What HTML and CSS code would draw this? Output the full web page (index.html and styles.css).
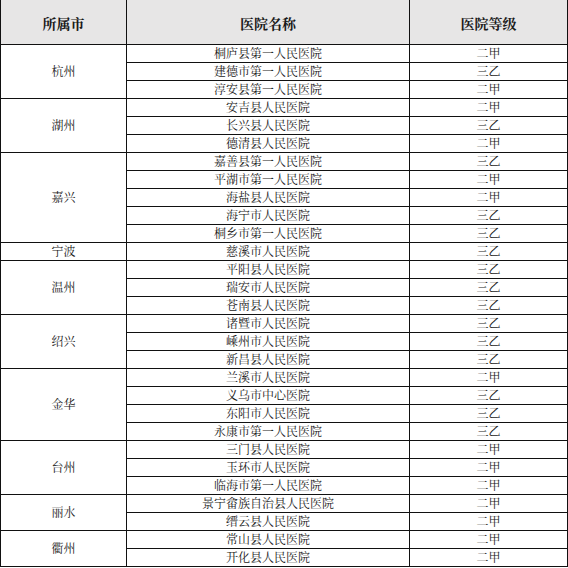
FILE: index.html
```html
<!DOCTYPE html>
<html lang="zh-CN">
<head>
<meta charset="utf-8">
<title>医院列表</title>
<link rel="stylesheet" href="styles.css">
</head>
<body>
<table class="hosp">
  <colgroup>
    <col class="c-city">
    <col class="c-name">
    <col class="c-grade">
  </colgroup>
  <thead>
    <tr class="head"><th>所属市</th><th>医院名称</th><th>医院等级</th></tr>
  </thead>
  <tbody>
    <tr><td rowspan="3" class="city">杭州</td><td>桐庐县第一人民医院</td><td>二甲</td></tr>
    <tr><td>建德市第一人民医院</td><td>三乙</td></tr>
    <tr><td>淳安县第一人民医院</td><td>二甲</td></tr>
    <tr><td rowspan="3" class="city">湖州</td><td>安吉县人民医院</td><td>二甲</td></tr>
    <tr><td>长兴县人民医院</td><td>三乙</td></tr>
    <tr><td>德清县人民医院</td><td>二甲</td></tr>
    <tr><td rowspan="5" class="city">嘉兴</td><td>嘉善县第一人民医院</td><td>三乙</td></tr>
    <tr><td>平湖市第一人民医院</td><td>二甲</td></tr>
    <tr><td>海盐县人民医院</td><td>二甲</td></tr>
    <tr><td>海宁市人民医院</td><td>三乙</td></tr>
    <tr><td>桐乡市第一人民医院</td><td>三乙</td></tr>
    <tr><td class="city">宁波</td><td>慈溪市人民医院</td><td>三乙</td></tr>
    <tr><td rowspan="3" class="city">温州</td><td>平阳县人民医院</td><td>三乙</td></tr>
    <tr><td>瑞安市人民医院</td><td>三乙</td></tr>
    <tr><td>苍南县人民医院</td><td>三乙</td></tr>
    <tr><td rowspan="3" class="city">绍兴</td><td>诸暨市人民医院</td><td>三乙</td></tr>
    <tr><td>嵊州市人民医院</td><td>三乙</td></tr>
    <tr><td>新昌县人民医院</td><td>三乙</td></tr>
    <tr><td rowspan="4" class="city">金华</td><td>兰溪市人民医院</td><td>二甲</td></tr>
    <tr><td>义乌市中心医院</td><td>三乙</td></tr>
    <tr><td>东阳市人民医院</td><td>三乙</td></tr>
    <tr><td>永康市第一人民医院</td><td>三乙</td></tr>
    <tr><td rowspan="3" class="city">台州</td><td>三门县人民医院</td><td>二甲</td></tr>
    <tr><td>玉环市人民医院</td><td>二甲</td></tr>
    <tr><td>临海市第一人民医院</td><td>二甲</td></tr>
    <tr><td rowspan="2" class="city">丽水</td><td>景宁畲族自治县人民医院</td><td>二甲</td></tr>
    <tr><td>缙云县人民医院</td><td>二甲</td></tr>
    <tr><td rowspan="2" class="city">衢州</td><td>常山县人民医院</td><td>二甲</td></tr>
    <tr><td>开化县人民医院</td><td>二甲</td></tr>
  </tbody>
</table>
</body>
</html>
```

FILE: styles.css
```css
html, body {
  margin: 0;
  padding: 0;
  background: #ffffff;
}

.hosp {
  border-collapse: collapse;
  table-layout: fixed;
  width: 567px;
  font-family: "Noto Serif CJK SC", "Noto Sans CJK SC", serif;
  color: #1a1a1a;
}

.c-city { width: 126px; }
.c-name { width: 283px; }
.c-grade { width: 158px; }

.hosp th,
.hosp td {
  border: 1px solid #111111;
  padding: 0;
  text-align: center;
  vertical-align: middle;
}

.hosp thead th {
  border-top: none;
}

.head {
  height: 44px;
  background: #e7e6e6;
}

.head th {
  font-size: 14px;
  font-weight: bold;
  line-height: 18px;
  padding-top: 2px;
}

.hosp tbody tr {
  height: 18px;
}

.hosp td {
  font-size: 12px;
  line-height: 16px;
}
```
